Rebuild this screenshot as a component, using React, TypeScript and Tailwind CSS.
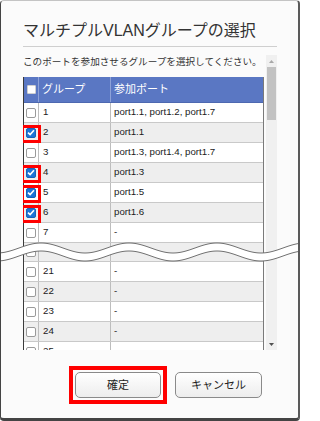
import React from "react";

type Row = { n: string; port: string; checked: boolean; h?: number };

const rows: Row[] = [
  { n: "1", port: "port1.1, port1.2, port1.7", checked: false },
  { n: "2", port: "port1.1", checked: true },
  { n: "3", port: "port1.3, port1.4, port1.7", checked: false },
  { n: "4", port: "port1.3", checked: true },
  { n: "5", port: "port1.5", checked: true },
  { n: "6", port: "port1.6", checked: true },
  { n: "7", port: "-", checked: false },
  { n: "", port: "-", checked: false, h: 19 },
  { n: "21", port: "-", checked: false },
  { n: "22", port: "-", checked: false },
  { n: "23", port: "-", checked: false },
  { n: "24", port: "-", checked: false },
  { n: "25", port: "-", checked: false },
];

function CheckBox({ checked }: { checked: boolean }) {
  if (checked) {
    return (
      <div className="w-[10px] h-[10px] rounded-[2px] bg-[#1b74d6] border border-[#1762b8] flex items-center justify-center">
        <svg width="8" height="7" viewBox="0 0 8 7">
          <path d="M1 3.6 L3.1 5.6 L7 1.2" fill="none" stroke="#ffffff" strokeWidth="1.6" />
        </svg>
      </div>
    );
  }
  return <div className="w-[10px] h-[10px] rounded-[2px] bg-white border border-[#9a9a9a]" />;
}

function Wave() {
  const pts: [number, number][] = [];
  for (let x = 0; x <= 300; x += 2) {
    const y = 11 - 5 * Math.cos((2 * Math.PI * (x - 40)) / 88);
    pts.push([x, y]);
  }
  const upper = pts.map(([x, y], i) => `${i === 0 ? "M" : "L"}${x} ${y.toFixed(2)}`).join(" ");
  const lowerPts = pts.map(([x, y]) => [x, y + 8] as [number, number]);
  const lower = lowerPts.map(([x, y], i) => `${i === 0 ? "M" : "L"}${x} ${y.toFixed(2)}`).join(" ");
  const fill =
    upper +
    " " +
    [...lowerPts].reverse().map(([x, y]) => `L${x} ${y.toFixed(2)}`).join(" ") +
    " Z";
  return (
    <svg
      className="absolute left-0 top-[236px] pointer-events-none"
      width="300"
      height="30"
      viewBox="0 0 300 30"
    >
      <path d={fill} fill="#ffffff" />
      <path d={upper} fill="none" stroke="#707070" strokeWidth="1" />
      <path d={lower} fill="none" stroke="#707070" strokeWidth="1" />
    </svg>
  );
}

export default function App() {
  return (
    <div className="relative w-[300px] h-[421px] bg-[#fbfbfb] border-t border-t-[#c4c4c4] border-l border-l-[#444444] border-r-[2px] border-r-[#5a5a5a] border-b-[3px] border-b-[#444444] rounded-[4px] font-['Liberation_Sans','Noto_Sans_CJK_JP',sans-serif] text-[#222222] overflow-hidden">
      <div className="pl-[22px] pr-[21px]">
        <div className="mt-[20px] h-[20px] leading-[20px] text-[16px] text-[#333333] pb-[5px] box-content border-b border-b-[#cfcfcf] whitespace-nowrap">
          マルチプルVLANグループの選択
        </div>

        <div className="mt-[8px] h-[295px] flex gap-[2px]">
          <div className="w-[241px] overflow-hidden">
            <div className="h-[14px] leading-[14px] text-[9.6px] text-[#333333] whitespace-nowrap">
              このポートを参加させるグループを選択してください。
            </div>
            <div className="mt-[8px] border-l border-l-[#3a3a3a] border-r border-r-[#7a7a7a]">
              <div className="h-[26px] flex bg-[#5a77c3] text-white text-[11px] border-b border-b-[#4d68b0]">
                <div className="w-[15px] border-r border-r-[#8ea2d8] flex items-center pl-[3px]">
                  <div className="w-[9px] h-[9px] bg-white border border-[#d0d0d0] rounded-[1px]" />
                </div>
                <div className="w-[72px] border-r border-r-[#8ea2d8] flex items-center pl-[3px]">グループ</div>
                <div className="flex-1 flex items-center pl-[3px]">参加ポート</div>
              </div>
              {rows.map((r, i) => (
                <div
                  key={i}
                  className={`relative flex border-b border-b-[#c9c9c9] text-[9.7px] text-[#1a1a1a] ${
                    i % 2 === 1 ? "bg-[#eeeeee]" : "bg-white"
                  } ${r.h === 19 ? "h-[19px]" : "h-[20px]"}`}
                >
                  <div className="w-[15px] border-r border-r-[#bdbdbd] flex items-center pl-[2px]">
                    <CheckBox checked={r.checked} />
                  </div>
                  <div className="w-[72px] border-r border-r-[#bdbdbd] flex items-center pl-[4px]">{r.n}</div>
                  <div className="flex-1 flex items-center pl-[3px] whitespace-nowrap">{r.port}</div>
                  {r.checked && (
                    <div className="absolute left-[-3px] top-[2px] w-[20px] h-[18px] border-[3px] border-[#ff0000] pointer-events-none" />
                  )}
                </div>
              ))}
            </div>
          </div>
          <div className="w-[11px] bg-[#f0f0f0] flex flex-col">
            <div className="h-[12px] flex items-center justify-center">
              <svg width="5" height="3" viewBox="0 0 5 3">
                <path d="M0 3 L2.5 0 L5 3 Z" fill="#a8a8a8" />
              </svg>
            </div>
            <div className="h-[53px] mx-[1px] bg-[#c2c2c2]" />
            <div className="flex-1" />
            <div className="h-[12px] flex items-center justify-center">
              <svg width="5" height="3" viewBox="0 0 5 3">
                <path d="M0 0 L5 0 L2.5 3 Z" fill="#505050" />
              </svg>
            </div>
          </div>
        </div>
      </div>

      <div className="mt-[16px] flex items-center pl-[68px] gap-[8px]">
        <div className="border-[4px] border-[#ff0000] p-[2px]">
          <div className="w-[86px] h-[26px] rounded-[5px] border border-[#8a8a8a] bg-linear-to-b from-[#ffffff] to-[#ededed] flex items-center justify-center text-[11px] text-[#222222]">
            確定
          </div>
        </div>
        <div className="w-[87px] h-[26px] rounded-[5px] border border-[#8a8a8a] bg-linear-to-b from-[#ffffff] to-[#ededed] flex items-center justify-center text-[11px] text-[#222222]">
          キャンセル
        </div>
      </div>

      <Wave />
    </div>
  );
}
